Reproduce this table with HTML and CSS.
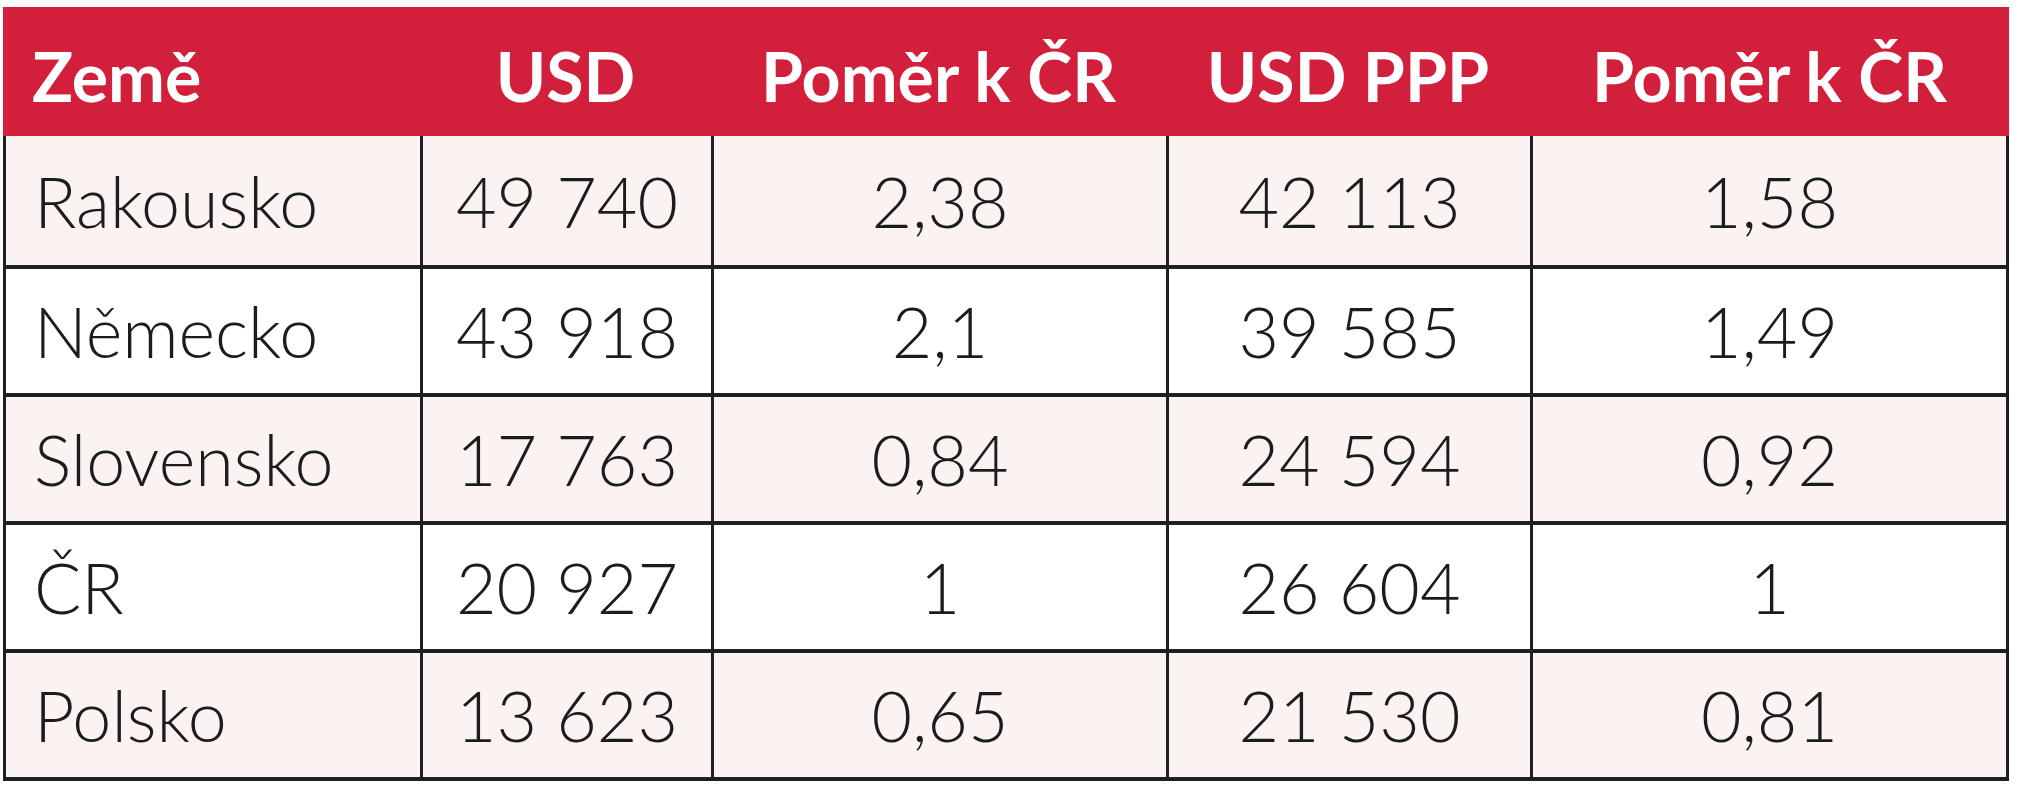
FILE: index.html
```html
<!DOCTYPE html>
<html lang="cs">
<head>
<meta charset="utf-8">
<title>HDP</title>
<link rel="stylesheet" href="styles.css">
</head>
<body>
<div class="table">
  <div class="th first">Země</div>
  <div class="th">USD</div>
  <div class="th">Poměr k ČR</div>
  <div class="th">USD PPP</div>
  <div class="th">Poměr k ČR</div>

  <div class="td first tall shade">Rakousko</div>
  <div class="td tall shade">49 740</div>
  <div class="td tall shade">2,38</div>
  <div class="td tall shade">42 113</div>
  <div class="td last tall shade">1,58</div>

  <div class="td first">Německo</div>
  <div class="td">43 918</div>
  <div class="td">2,1</div>
  <div class="td">39 585</div>
  <div class="td last">1,49</div>

  <div class="td first shade">Slovensko</div>
  <div class="td shade">17 763</div>
  <div class="td shade">0,84</div>
  <div class="td shade">24 594</div>
  <div class="td last shade">0,92</div>

  <div class="td first">ČR</div>
  <div class="td">20 927</div>
  <div class="td">1</div>
  <div class="td">26 604</div>
  <div class="td last">1</div>

  <div class="td first shade">Polsko</div>
  <div class="td shade">13 623</div>
  <div class="td shade">0,65</div>
  <div class="td shade">21 530</div>
  <div class="td last shade">0,81</div>
</div>
</body>
</html>
```
FILE: styles.css
```css
html, body {
  margin: 0;
  padding: 0;
  background: #ffffff;
}

.table {
  display: grid;
  grid-template-columns: 417px 291px 455px 364px 479px;
  width: 2006px;
  margin: 7px 0 0 3px;
  font-family: Lato, "Liberation Sans", sans-serif;
}

.th {
  height: 129px;
  box-sizing: border-box;
  background: #d21f3c;
  color: #ffffff;
  font-weight: 700;
  font-size: 68px;
  line-height: 1;
  display: flex;
  align-items: center;
  justify-content: center;
  padding-top: 8px;
}

.th.first {
  justify-content: flex-start;
  padding-left: 29px;
}

.td {
  height: 128px;
  box-sizing: border-box;
  border-left: 3px solid #1f1f1f;
  border-bottom: 4px solid #1f1f1f;
  background: #ffffff;
  color: #1c1c1c;
  font-weight: 300;
  font-size: 70px;
  line-height: 1;
  display: flex;
  align-items: center;
  justify-content: center;
}

.td.tall {
  height: 133px;
}

.td.shade {
  background: #fbf3f1;
}

.td.first {
  justify-content: flex-start;
  padding-left: 28px;
}

.td.last {
  border-right: 3px solid #1f1f1f;
}
```
